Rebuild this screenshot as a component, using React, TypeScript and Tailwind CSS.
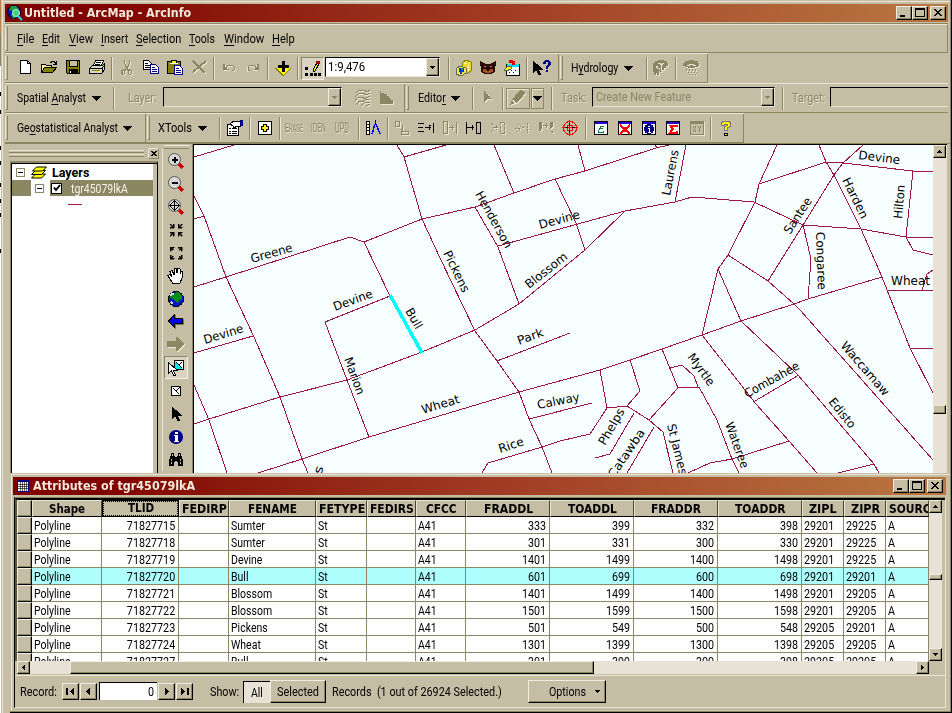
import React, { useLayoutEffect, useRef, useState } from "react";

const UI = "font-['Roboto','Liberation_Sans',sans-serif]";
const BOLD = "font-['DejaVu_Sans','Noto_Sans',sans-serif] font-bold";

/* Text condensed or stretched to an exact width. */
function T({ w, children, className = "" }: { w: number; children: React.ReactNode; className?: string }) {
  const ref = useRef<HTMLSpanElement>(null);
  const [s, setS] = useState(1);
  useLayoutEffect(() => {
    if (ref.current) setS(w / ref.current.offsetWidth);
  }, [w]);
  return (
    <span className={`inline-flex shrink-0 whitespace-nowrap ${className}`} style={{ width: w }}>
      <span ref={ref} className="inline-block shrink-0 origin-left" style={{ transform: `scaleX(${s})` }}>
        {children}
      </span>
    </span>
  );
}

const U = ({ children }: { children: React.ReactNode }) => (
  <span className="underline decoration-black decoration-1 underline-offset-[2px] [text-decoration-skip-ink:none]">{children}</span>
);

const RAISED =
  "bg-[#c6bda5] border-t border-l border-t-[#f0ece0] border-l-[#f0ece0] border-r border-b border-r-black border-b-black shadow-[inset_-1px_-1px_0_#8c8663]";
const DIS = "text-[#8c8663] [text-shadow:1px_1px_0_#e9e4d6]";
const EMB = "[filter:drop-shadow(1px_1px_0_#e9e4d6)]";

const Grip = ({ className = "" }) => (
  <div className={`h-6 w-[3px] shrink-0 border-b border-l border-r border-b-[#8c8663] border-l-[#e9e4d6] border-r-[#8c8663] ${className}`} />
);
const Sep = ({ className = "" }) => (
  <div className={`h-[23px] w-[2px] shrink-0 border-l border-r border-l-[#8c8663] border-r-[#e9e4d6] ${className}`} />
);
const End = ({ className = "" }) => <div className={`h-full w-px shrink-0 bg-[#8c8663] ${className}`} />;
const Arrow = ({ className = "" }) => (
  <svg className={`h-[5px] w-[9px] shrink-0 ${className}`} viewBox="0 0 9 5" shapeRendering="crispEdges">
    <path d="M0 0h9v1h-1v1h-1v1h-1v1h-1v1h-1v-1h-1v-1h-1v-1h-1v-1h-1z" />
  </svg>
);
const Slot = ({ children }: { children: React.ReactNode }) => (
  <div className="flex h-6 w-6 shrink-0 items-center justify-center">{children}</div>
);
function Ic({ children, dis = false, className = "" }: { children: React.ReactNode; dis?: boolean; className?: string }) {
  return (
    <svg className={`h-4 w-4 shrink-0 overflow-visible ${dis ? EMB : ""} ${className}`} viewBox="0 0 16 16" fill="none" stroke={dis ? "#8c8663" : "#000"} shapeRendering="crispEdges">
      {children}
    </svg>
  );
}

/* Toolbar glyphs */
const NewI = () => (<Ic><path d="M3.500 .5h7l3 3v10h-10z" fill="#fff" /><path d="M10.500 .5v3h3" /></Ic>);
const OpenI = () => (
  <Ic>
    <path d="M.5 12.500v-8h4l1 1h5v3" fill="#fff29a" />
    <path d="M.5 12.500l3-5h12l-4 5z" fill="#848000" />
    <path d="M9 2.500h1v-1h3v1h1v1M15 1v3h-3" />
  </Ic>
);
const SaveI = () => (
  <Ic>
    <path d="M1.500 .5h13v13h-12l-1-1z" fill="#848000" />
    <path d="M4.500 .5h8v6h-8z" fill="#c6bda5" /><path d="M4.500 9.500h8v4h-8z" fill="#000" /><path d="M5.500 11v2" stroke="#fff" />
  </Ic>
);
const PrintI = () => (
  <Ic>
    <path d="M4.500 5.500l2-5h8l-2 5z" fill="#fff" /><path d="M7 2.500h5M6 4.500h5" />
    <path d="M.5 8.500l3-3h10l2-2v6l-3 4h-12z" fill="#d8d8d0" /><path d="M1 8.500h12v4M13 8.500l2.500-3" /><path d="M3 10.500h8" stroke="#848000" /><path d="M8 11.500h3" stroke="#ffff00" />
  </Ic>
);
const CutI = () => (
  <Ic dis>
    <path d="M5 0h1v4h1v2h2V4h1V0h1v4h-1v3H9v2h2v1h2v4h-1v1h-2v-1H9v-3H8V9H7v2H6v3H5v1H3v-1H2v-4h2V9h3V7H6V4H5zM4 10v4h1v-4zM10 11v3h2v-3z" fill="#8c8663" fillRule="evenodd" stroke="none" />
  </Ic>
);
const Sheet = ({ x, y, c = "#000" }: { x: number; y: number; c?: string }) => (
  <g transform={`translate(${x} ${y})`}><path d="M.5.5h5l3 3v6h-8z" fill="#fff" stroke={c} /><path d="M2 3.500h3M2 5.500h5M2 7.500h5" stroke={c} /></g>
);
const CopyI = () => (<Ic><Sheet x={0} y={0} /><Sheet x={7} y={4} c="#000084" /></Ic>);
const PasteI = () => (<Ic><path d="M.5 1.500h13v12h-13z" fill="#848000" /><path d="M4.500 .5h5v3h-5z" fill="#ffff00" /><path d="M3 3.500h8" stroke="#fff" /><Sheet x={7} y={5} c="#000084" /></Ic>);
const DelI = () => (<Ic dis><path d="M2 1l12 12M15 1L2 12" strokeWidth="2" /></Ic>);
const UndoI = ({ flip = false }) => (<Ic dis className={flip ? "-scale-x-100" : ""}><path d="M2.500 4v5h5M4 8l3-3h4l2 2v3l-2 1" /><path d="M2 4h2v3h2v2H2z" fill="#8c8663" stroke="none" /></Ic>);
const AddI = () => (
  <Ic><path d="M0 8h16v1h-1v1h-1v1h-1v1h-1v1h-1v1h-1v1H9v1H7v-1H6v-1H5v-1H4v-1H3v-1H2v-1H1V9H0z" fill="#848000" stroke="none" /><path d="M1 8h14l-7 7z" fill="#ffff00" stroke="none" /><path d="M7 1h3v4h4v3h-4v4H7V8H3V5h4z" fill="#000" stroke="none" /></Ic>
);
const PencilDots = () => (
  <Ic><path d="M0 7h3v3h-3zM0 13h3v3h-3zM5 13h3v3h-3zM9 13h3v3h-3zM13 13h3v3h-3z" fill="#000" stroke="none" /><path d="M8 10l5-9 2 1-5 9-2 1z" fill="#ffff00" /><path d="M12 1l3 1-1 2-3-1z" fill="#f00" stroke="#800" /></Ic>
);
const CatalogI = () => (
  <Ic><path d="M6 3l4-3 5 2v9l-4 3-5-2z" fill="#eedd22" stroke="#848000" /><path d="M8 3h3M12 5v6" stroke="#fff8c0" /><path d="M0 9l4-3 6 2v5l-5 3-5-2z" fill="#f7e84a" stroke="#665" /><path d="M3 8h5v4H6v2H4v-2H3z" fill="#0038d8" stroke="none" /><path d="M5 8h2v2H5z" fill="#008c40" stroke="none" /></Ic>
);
const MaskI = () => (
  <Ic><path d="M0 1h1v1h2v1h2v1h6V3h2V2h2V1h1v5h-1v6h-1v1h-2v1H4v-1H2v-1H1V6H0z" fill="#2a0c02" stroke="none" /><path d="M3 9h3v1h4V9h3v3h-2v1H5v-1H3z" fill="#a5521a" stroke="none" /><path d="M4 6h2v1H4zM10 6h2v1h-2z" fill="#c87840" stroke="none" /><path d="M7 9h2v2H7z" fill="#000" stroke="none" /></Ic>
);
const ToolboxI = () => (
  <Ic><path d="M2.500 4.500h13v11h-13z" fill="#fff" /><path d="M3 4h12v3H3z" fill="#00e0ff" stroke="none" /><path d="M5 0h4v1h2v4H8V3H5z" fill="#e00000" stroke="none" /><path d="M0 10l4-4h3v3l-5 2z" fill="#ffff00" stroke="#665" /><path d="M5 12h8M7 10h7" strokeDasharray="1 3" /></Ic>
);
const Ptr = ({ x = 0, y = 0, fill = "#000" }) => <path transform={`translate(${x} ${y})`} d="M.5.5v11l3-3 2 5h2l-2-5h4z" fill={fill} />;
const HelpPtr = () => (
  <Ic><Ptr x={-1} y={1} /><path d="M9 2h1V1h1V0h4v1h1v1h1v3h-1v1h-1v1h-1v2h-2V6h1V5h1V2h-2v2H9zM12 10h2v2h-2z" fill="#000084" stroke="none" /></Ic>
);
const Hydro1 = () => (
  <Ic dis>
    <path d="M1 3h2V1h3V0h6v1h3v2h1v3h-2v2h-2v2h-2v2H8V8H6V6H4v6H1z" fill="#8c8663" stroke="none" />
    <path d="M6 3h2v1h2V3h2M9.500 4v7" stroke="#e9e4d6" /><path d="M2 6v9h2v-2h1v2h2v-4h1v-1H7V9H5V8H4V7H3V6z" fill="#8c8663" stroke="none" />
  </Ic>
);
const Hydro2 = () => (<Ic dis><path d="M0 3h2V1h4V0h5v1h4v2h1v3h-1v1h-3v1H5V7H2V6H0z" fill="#8c8663" stroke="none" /><path d="M4 5h2V4h4v1h3" stroke="#e9e4d6" /><path d="M3 9l4 6M6 9l4 6M9 9l4 6M12 9l3 5" strokeDasharray="2 1" /></Ic>);
const Contour = () => (<Ic dis><path d="M1 3l3-3h5l3 2 3-2M0 7l4-4h4l3 2 4-2M0 11l3-4h5v2l3-1 4-2M2 15l2-4 3 1 3-2 5-1M6 16l3-3 6-1M11 16l4-2" /></Ic>);
const Histo = () => (<Ic dis><path d="M1 14V1h1v2h3v1h3v2h2v2h2v2h2v4z" fill="#8c8663" stroke="none" /></Ic>);
const PenI = () => (<Ic dis><path d="M1 14l2-5 8-9 4 3-8 9z" fill="#8c8663" /><path d="M2 10l4 3" stroke="#e9e4d6" /></Ic>);
const PropI = () => (<Ic><path d="M.5 4.500h11v11h-11z" fill="#fff" /><path d="M2 8.500h2M5 8.500h5M2 11.500h2M5 11.500h5M2 13.500h2M5 13.500h5" /><path d="M3 4l4-3h6v5h-3l-3 2-1-2z" fill="#fff" /><path d="M13 .5h2v5h-2z" fill="#000084" stroke="#000084" /></Ic>);
const PlusI = () => (<Ic><path d="M1.500 1.500h13v13h-13z" fill="#fff" strokeWidth="1" /><path d="M6.500 4.500h3v2h2v3h-2v2h-3v-2h-2v-3h2z" fill="#ffff00" /></Ic>);
const CompassI = () => (<Ic><path d="M1.500 1.500h3v13h-3z" fill="#fff" /><path d="M2 4.500h2M2 7.500h2M2 10.500h2" /><path d="M10.500 0v4" /><path d="M10 4L7 14M11 4l4 10" stroke="#00f" strokeWidth="1.500" /></Ic>);
const B1 = () => (<Ic dis><path d="M1.500 1.500h4v5h-4zM8.500 4.500v6M7 9l2 2M7.500 11.500h7v3h-7z" /></Ic>);
const Extend = () => (<Ic><path d="M0 3.500h6M0 7.500h5M0 11.500h6M7 7.500h6M12.500 4.500v1M11.500 5v5M15.500 3v10" /></Ic>);
const BoxArrow = ({ dis = false, flip = false }) => (
  <Ic dis={dis}>{flip ? <path d="M.5 2v12M1 7.500h7M6.500 5v5M10.500 2.500h4v11h-4z" /> : <path d="M1.500 1.500h4v12h-4zM7 7.500h5M10.500 5v5M14.500 2v12" />}</Ic>
);
const B2 = () => (<Ic dis><path d="M1 3l2 2M1 12l2-2M3 7.500h5M6.500 5v5M10.500 2.500h4v11h-4z" strokeDasharray="3 1" /></Ic>);
const B3 = () => (<Ic dis><path d="M4 4l3 3M1 8h6M3 12l3-3M8 7.500h3M13.500 3v10" strokeDasharray="2 1" /></Ic>);
const B4 = () => (<Ic dis><path d="M1 2h2v7l-1 2-1-2zM5 5.500h5M8 3v5M11.500 2.500h3v4l-2 2M13 11h1v2" fill="#8c8663" /></Ic>);
const Target = () => (<Ic><circle cx="8" cy="8" r="6.500" stroke="#f00" /><circle cx="8" cy="8" r="3" stroke="#f00" /><path d="M7.500 0v16M0 7.500h16" stroke="#f00" /><path d="M7.500 3v3M7.500 10v3M3 7.500h3M10 7.500h3" /></Ic>);
const TableI = ({ children, dis = false }: { children: React.ReactNode; dis?: boolean }) => (
  <Ic dis={dis}><path d="M1.500 1.500h13v13h-13z" fill={dis ? "#c6bda5" : "#fff"} /><path d="M2 2h12v2H2z" fill={dis ? "#8c8663" : "#2800d8"} stroke="none" />{children}</Ic>
);
const HelpY = () => (<Ic><path d="M3.500 5V3l2-2h5l2 2v3l-3 2v2h-3V7l3-2V4h-3v1z" fill="#ffff00" stroke="#777" /><path d="M6.500 13h3v2h-3z" fill="#ffff00" /></Ic>);

/* Map tool glyphs */
const Lens = ({ d, thin = false }: { d: string; thin?: boolean }) => (
  <Ic><path d="M11 11l4 4" stroke="#d00000" strokeWidth="3" /><circle cx="6.500" cy="6.500" r="6" fill="#d8d8d8" shapeRendering="auto" stroke="#555" /><path d={d} strokeWidth={thin ? 1 : 2} /></Ic>
);
const Four = ({ out = false }) => (
  <Ic>
    {out ? (
      <path d="M2 2h4v1H4v1h1v1H4V4H3v2H2zM10 2h4v4h-1V4h-1v1h-1V4h1V3h-2zM2 10h1v2h1v-1h1v1H4v1h2v1H2zM13 10h1v4h-4v-1h2v-1h-1v-1h1v1h1z" strokeWidth=".5" fill="#000" />
    ) : (
      <path d="M2 2h1v1h1v1h1V2h1v4H2V5h2V4H3V3H2zM13 2h1v1h-1v1h-1v1h2v1h-4V2h1v2h1V3h1zM2 10h4v4H5v-2H4v1H3v1H2v-1h1v-1h1v-1H2zM10 10h4v1h-2v1h1v1h1v1h-1v-1h-1v-1h-1v2h-1z" strokeWidth=".5" fill="#000" />
    )}
  </Ic>
);
const Hand = () => (<Ic><path d="M5 15.500l-4-6-1-2 2-1 2 2-2-5 2-1 2 4V1l2-1 1 5 1-5 2 1v5l1-3 2 1-1 6-2 5z" fill="#fff" /></Ic>);
const Globe = () => (<Ic><circle cx="8" cy="8" r="7.500" fill="#0018c0" /><path d="M6 2l4-1 4 3v4l-3 1-1 4-3-3-2-2-3-1 1-3z" fill="#008c18" stroke="none" /><path d="M2 5l2-2 2 0M3 11l2 2" stroke="#c8d8f0" strokeWidth="1.500" /></Ic>);
const BigArrow = ({ right = false }) => (
  <Ic dis={right} className={right ? "" : "[filter:drop-shadow(1px_1px_0_#777)]"}>
    {right ? <path d="M-1 4h9V0h2l6 7-6 7H8v-4h-9z" fill="#8c8663" stroke="none" /> : <path d="M14.500 4.500h-8v-4L.5 7l6 6.500v-4h8z" fill="#0000ff" />}
  </Ic>
);
const SelFeat = () => (<Ic><path d="M6.500.5h9v9h-9z" fill="#fff" strokeWidth="1.500" /><path d="M7 1l7 8H7z" fill="#00e8f0" stroke="none" /><path d="M8 2l6 6M11 5l3-3" /><Ptr x={0} y={2} fill="#fff" /></Ic>);
const ClearSel = () => (<Ic><path d="M3.500 3.500h9v9h-9z" fill="#fff" strokeWidth="1.500" /><path d="M5 5l6 6M8 8l4-4" /></Ic>);
const Info = () => (<Ic><circle cx="8" cy="8" r="7" fill="#000084" stroke="none" shapeRendering="auto" /><path d="M7 3h3v2H7zM6 6h4v6h1v1H6v-1h1V7H6z" fill="#fff" stroke="none" /></Ic>);
const Bino = () => (<Ic><path d="M3 1h3v3h1v1h2V4h1V1h3v3h1v3h1v7h-5v-4H9V9H7v1H6v4H1V7h1V4h1z" fill="#000" stroke="none" /><path d="M3.500 7v5M12.500 7v5M4.500 2v3M11.500 2v3" stroke="#c6bda5" strokeDasharray="2 1" /></Ic>);

const LOOKUP: Record<string, React.ReactNode> = {
  in: <Lens d="M3.500 6.500h6M6.500 3.500v6" />, out: <Lens d="M3.500 6.500h6" />, full: <Lens thin d="M1 6.500h11M6.500 1v11M4.500 3v1M3 4.500h1M8.500 3v1M9 4.500h1M4.500 9v1M3 8.500h1M8.500 9v1M9 8.500h1M5 2.500h3M5 10.500h3M2.500 5v3M10.500 5v3" />,
  fin: <Four />, fout: <Four out />, pan: <Hand />, globe: <Globe />, back: <BigArrow />, fwd: <BigArrow right />,
  sel: <SelFeat />, clear: <ClearSel />, ptr: <Ic><Ptr x={4} y={1} /></Ic>, info: <Info />, find: <Bino />,
};

const WinBtn = ({ d, className = "" }: { d: string; className?: string }) => (
  <div className={`flex h-[14px] w-4 items-center justify-center ${RAISED} ${className}`}>
    <svg className="h-[10px] w-[10px]" viewBox="0 0 10 10" fill="none" stroke="#000" shapeRendering="crispEdges"><path d={d} /></svg>
  </div>
);
const WinBtns = () => (
  <div className="ml-auto mr-[2px] flex">
    <WinBtn d="M1 8h5M1 7.500h5" /><WinBtn d="M.5 .5h9v8h-9zM.5 1.500h9" /><WinBtn className="ml-[2px]" d="M1 1l7 7M2 1l7 7M8 1l-7 7M9 1l-7 7" />
  </div>
);
const TITLE = "flex shrink-0 items-center bg-linear-to-r from-[#800000] from-10% via-[#a03822] via-50% to-[#b87842]";

function Combo({ children, className, cut = false, dis = true }: { children?: React.ReactNode; className: string; cut?: boolean; dis?: boolean }) {
  return (
    <div className={`-mt-[2px] flex h-[20px] shrink-0 border-t border-l border-black border-b border-b-[#e9e4d6] pl-[2px] ${cut ? "" : "border-r border-r-[#e9e4d6]"} ${className}`}>
      <div className="flex flex-1 items-center">{children}</div>
      {!cut && (
        <div className={`flex h-[18px] w-[13px] items-center justify-center ${RAISED}`}>
          <svg className="h-[3px] w-[5px]" viewBox="0 0 5 3" shapeRendering="crispEdges"><path d="M0 0h5v1h-1v1h-1v1h-1v-1h-1v-1h-1z" fill={dis ? "#8c8663" : "#000"} /></svg>
        </div>
      )}
    </div>
  );
}

const TB = "flex h-[30px] shrink-0 items-center border-t border-b border-t-[#e9e4d6] border-b-[#8c8663] text-[13px] leading-[14px]";

const ROADS = [
  "194,157 234,145", "194,196 204,216 226,277 254,337 280,397 302,459 308,473", "194,219 204,216",
  "194,287 226,277 350,237 364,242 422,219 475,207 514,193 555,179 585,171 656,148 669,145",
  "397,145 404,157 422,219 440,258 475,331 497,361 519,392 529,419 542,447 552,473", "404,157 446,145",
  "364,242 390,296", "390,296 325,322 347,380 369,437", "194,353 253,336", "194,385 209,420 227,473",
  "194,424 209,419 280,397 347,380 422,352 475,330 519,304 585,250 625,211",
  "258,473 302,459 369,437 519,392 600,370 630,360 662,349 702,335 741,321 794,304 808,299 882,277",
  "475,207 498,247 519,304", "498,246 625,211 675,202 692,197 754,202", "494,145 514,193", "555,179 576,223 585,250",
  "578,145 585,171", "655,145 657,148", "686,145 675,202", "777,145 759,184 755,202 728,255 718,269 702,335",
  "759,184 826,162 843,163 913,171 933,171", "819,145 826,162 834,175 861,229 882,277 887,290 895,310 910,348 933,393",
  "910,348 933,349", "863,145 843,163 834,175 803,225 768,281", "754,202 803,225 861,229 906,237 933,237",
  "913,171 906,237 913,250 933,255", "803,225 811,259 808,299", "728,255 768,281 794,304 800,310 933,460",
  "718,269 741,321 798,375 874,464 879,473", "887,290 933,291", "922,290 927,274 933,270",
  "702,335 756,404 789,441 817,473", "600,370 607,408 627,406 640,391 630,360",
  "607,408 590,434 560,441 542,447 488,463 482,473", "627,406 649,420 663,432 673,473", "654,427 627,473",
  "649,420 678,388 699,387 717,420 732,459 739,473", "678,388 662,349", "670,368 682,365 694,376 698,387",
  "634,413 610,454 595,458", "688,473 710,463 732,459 789,441", "755,401 799,375", "838,473 874,464", "497,361 570,333", "529,419 592,403",
];
const LABELS: [string, number, number, number, number][] = [
  ["Greene", 252, 263, -16, 43], ["Devine", 335, 311, -20, 41], ["Devine", 205, 344, -17, 41], ["Bull", 405, 311, 60, 22],
  ["Pickens", 443, 253, 64, 45], ["Henderson", 475, 194, 61, 63], ["Devine", 540, 229, -15, 42], ["Blossom", 529, 289, -38, 50],
  ["Laurens", 670, 196, -79, 46], ["Park", 519, 345, -20, 27], ["Marion", 344, 359, 70, 39], ["Wheat", 423, 414, -17, 39],
  ["Calway", 538, 409, -11, 43], ["Rice", 500, 453, -18, 26], ["Phelps", 605, 446, -60, 40], ["Catawba", 614, 479, -56, 56],
  ["St James", 667, 425, 76, 52], ["Myrtle", 687, 357, 54, 37], ["Wateree", 725, 424, 70, 48], ["Combahee", 747, 398, -29, 61],
  ["Waccamaw", 840, 346, 49, 67], ["Edisto", 828, 402, 51, 35], ["Santee", 790, 235, -57, 41], ["Harden", 842, 180, 64, 44],
  ["Hilton", 902, 219, -85, 34], ["Devine", 858, 159, 7, 42], ["Congaree", 816, 232, 88, 58], ["Wheat", 891, 285, 0, 39], ["s", 321, 475, -70, 8],
];

const COLS: [string, string, number, boolean][] = [
  ["Shape", "w-[70px]", 36, false], ["TLID", "w-[77px]", 26, true], ["FEDIRP", "w-[50px]", 45, false], ["FENAME", "w-[87px]", 49, false],
  ["FETYPE", "w-[51px]", 46, false], ["FEDIRS", "w-[49px]", 44, false], ["CFCC", "w-[50px]", 31, false], ["FRADDL", "w-[84px]", 49, true],
  ["TOADDL", "w-[84px]", 49, true], ["FRADDR", "w-[84px]", 50, true], ["TOADDR", "w-[84px]", 51, true], ["ZIPL", "w-[42px]", 28, false],
  ["ZIPR", "w-[42px]", 29, false], ["SOURC", "w-[43px]", 42, false],
];
const row = (id: string, name: string, n: string, zl: string, zr: string) => ["Polyline", id, "", name, "St", "", "A41", ...n.split(" "), zl, zr, "A"];
const ROWS = [
  row("71827715", "Sumter", "333 399 332 398", "29201", "29225"), row("71827718", "Sumter", "301 331 300 330", "29201", "29225"),
  row("71827719", "Devine", "1401 1499 1400 1498", "29201", "29225"), row("71827720", "Bull", "601 699 600 698", "29201", "29201"),
  row("71827721", "Blossom", "1401 1499 1400 1498", "29201", "29205"), row("71827722", "Blossom", "1501 1599 1500 1598", "29201", "29205"),
  row("71827723", "Pickens", "501 549 500 548", "29205", "29201"), row("71827724", "Wheat", "1301 1399 1300 1398", "29205", "29205"),
  row("71827727", "Bull", "301 399 300 398", "29205", "29205"),
];

const SmallBtn = ({ d, className = "h-[13px] w-[13px]" }: { d: string; className?: string }) => (
  <div className={`flex shrink-0 items-center justify-center ${RAISED} ${className}`}>
    <svg className="h-[9px] w-[11px]" viewBox="0 0 11 9" shapeRendering="crispEdges"><path d={d} /></svg>
  </div>
);
const UP = "M5 3h1v1h1v1h1v1H3v-1h1v-1h1z";
const DOWN = "M3 3h5v1h-1v1h-1v1h-1v-1h-1v-1h-1z";
const LEFT = "M6 2h1v5H6v-1H5v-1H4v-1h1v-1h1z";
const RIGHT = "M4 2h1v1h1v1h1v1h-1v1h-1v1h-1z";

const MENU: [string, string, number, string][] = [
  ["F", "ile", 17, "ml-[9px]"], ["E", "dit", 18, "ml-[8px]"], ["V", "iew", 24, "ml-[9px]"], ["I", "nsert", 27, "ml-[8px]"],
  ["S", "election", 45, "ml-[8px]"], ["T", "ools", 26, "ml-[8px]"], ["W", "indow", 40, "ml-[9px]"], ["H", "elp", 23, "ml-[8px]"],
];

function AttributeWindow() {
  return (
    <div className="absolute left-[10px] top-[473px] flex h-[240px] w-[942px] flex-col border-b border-r border-black bg-[#c6bda5]">
      <div className="flex flex-1 flex-col border-b border-r border-b-[#8c8663] border-r-[#8c8663] pl-px pt-px">
        <div className="flex flex-1 flex-col border-l border-t border-[#e9e4d6] pl-px pr-[3px] pt-[2px]">
          <div className={`h-[18px] w-[933px] pr-px ${TITLE}`}>
            <svg className="ml-1 h-3 w-3" viewBox="0 0 12 12" shapeRendering="crispEdges"><path d="M0 0h12v12H0z" fill="#000084" /><path d="M1 2h10v9H1z" fill="#fff" /><path d="M1 4.500h10M1 6.500h10M1 8.500h10M3.500 2v9M5.500 2v9M7.500 2v9M9.500 2v9" stroke="#000" strokeWidth=".6" /></svg>
            <T w={162} className={`ml-[4px] text-[12px] leading-[16px] text-[#f1e9dc] ${BOLD}`}>Attributes of tgr45079lkA</T>
            <WinBtns />
          </div>
          <div className="ml-px mt-[2px] flex h-[211px] w-[932px] flex-col border-b border-l border-r border-t border-b-[#e9e4d6] border-l-black border-r-[#e9e4d6] border-t-[#8c8663]">
            <div className="flex h-[178px] shrink-0 flex-col border-b border-b-[#e9e4d6]">
              <div className="flex h-[163px] border-l-2 border-t-2 border-l-[#5c583e] border-t-black">
                <div className="flex w-[912px] flex-col overflow-hidden">
                  <div className="flex h-[17px] shrink-0">
                    <div className={`w-[15px] shrink-0 ${RAISED}`} />
                    {COLS.map(([n, cw, tw], i) => (
                      <div key={n} className={`flex shrink-0 items-center overflow-hidden bg-[#c6bda5] ${cw} ${n === "TLID" ? "justify-center border border-black pb-[2px] outline-1 -outline-offset-2 outline-dotted outline-black" : "border-b border-l border-r border-t border-b-black border-l-[#e9e4d6] border-r-[#4a4630] border-t-[#e9e4d6]"} ${i === 13 ? "justify-start pl-[2px]" : "justify-center"}`}>
                        <T w={tw} className={`text-[12px] leading-[14px] ${BOLD}`}>{n}</T>
                      </div>
                    ))}
                  </div>
                  {ROWS.map((r, k) => (
                    <div key={k} className={`flex h-[17px] shrink-0 ${k === 3 ? "bg-[#b0ffff]" : "bg-white"}`}>
                      <div className={`w-[15px] shrink-0 ${RAISED}`} />
                      {r.map((v, i) => (
                        <div key={i} className={`flex shrink-0 items-center border-b border-r border-[#8c8663] text-[12.5px] leading-[15px] ${COLS[i][1]} ${COLS[i][3] ? "justify-end pr-[3px]" : "pl-[2px]"}`}>
                          <span className={COLS[i][3] ? "origin-right scale-x-[0.86]" : i > 9 ? "origin-left scale-x-[0.86]" : "origin-left scale-x-[0.84]"}>{v}</span>
                        </div>
                      ))}
                    </div>
                  ))}
                </div>
                <div className="flex w-[13px] flex-col bg-[#e7e2d5]">
                  <SmallBtn d={UP} />
                  <div className={`mt-[61px] h-[6px] ${RAISED}`} />
                  <div className="flex-1" />
                  <SmallBtn d={DOWN} />
                </div>
              </div>
              <div className="ml-[2px] flex h-[13px] w-[912px] bg-[#e7e2d5]">
                <SmallBtn d={LEFT} />
                <div className={`ml-[40px] w-[524px] ${RAISED}`} />
                <div className="flex-1" />
                <SmallBtn d={RIGHT} />
              </div>
            </div>
            <div className="flex h-[30px] items-center text-[13px] leading-[15px]">
              <T w={37} className="ml-[5px]">Record:</T>
              <SmallBtn className="ml-[5px] h-[17px] w-[17px]" d="M1 1h2v7H1zM8 1h1v7H8v-1H7v-1H6v-1H5v-1h1v-1h1v-1h1z" />
              <SmallBtn className="ml-px h-[17px] w-[17px]" d="M6 1h1v7H6v-1H5v-1H4v-1H3v-1h1v-1h1v-1h1z" />
              <div className="ml-[2px] flex h-[18px] w-[58px] items-center justify-end border-l border-t border-black bg-white pr-[3px] text-[12.5px]"><T w={6}>0</T></div>
              <SmallBtn className="ml-px h-[17px] w-[17px]" d="M4 1h1v1h1v1h1v1h1v1h-1v1h-1v1h-1v1h-1z" />
              <SmallBtn className="ml-px h-[17px] w-[17px]" d="M2 1h1v1h1v1h1v1h1v1H5v1H4v1H3v1H2zM8 1h2v7H8z" />
              <T w={29} className="ml-[17px]">Show:</T>
              <div className="ml-[4px] mt-px flex h-[22px] w-[27px] items-center justify-center border-l border-t border-black bg-[#e7e2d5]"><T w={12}>All</T></div>
              <div className={`mt-px flex h-[23px] w-[56px] items-center justify-center ${RAISED}`}><T w={42}>Selected</T></div>
              <T w={170} className="ml-[6px]">Records&nbsp; (1 out of 26924 Selected.)</T>
              <div className={`ml-[26px] mt-px flex h-[23px] w-[78px] items-center pl-[20px] ${RAISED}`}>
                <T w={37}>Options</T>
                <svg className="ml-[9px] h-[3px] w-[5px]" viewBox="0 0 5 3" shapeRendering="crispEdges"><path d="M0 0h5v1h-1v1h-1v1h-1v-1h-1v-1h-1z" /></svg>
              </div>
            </div>
          </div>
        </div>
      </div>
    </div>
  );
}

export default function App() {
  return (
    <div className={`relative flex h-[713px] w-[952px] overflow-hidden bg-[#c6bda5] text-black ${UI}`}>
      <div className="flex w-px shrink-0 flex-col bg-white">
        <div className="h-[34px] bg-[#b8864a]" /><div className="h-[32px] bg-[#8c8663]" />
        {[30, 18, 36, 15, 22, 16, 14, 36].map((h, i) => (
          <div key={i} className="border-b-4 border-black" style={{ height: h }} />
        ))}
      </div>
      <div className="flex w-[951px] shrink-0 border-r border-black pl-px">
        <div className="flex w-[949px] flex-col border-l border-r border-l-[#e9e4d6] border-r-[#8c8663] pl-[2px]">
          <div className="-ml-[2px] mt-px h-px shrink-0 bg-[#e9e4d6]" />
          <div className={`mt-[2px] h-[18px] w-[943px] ${TITLE}`}>
            <svg className="ml-[2px] h-4 w-4" viewBox="0 0 16 16"><circle cx="7" cy="7" r="6.500" fill="#0018a8" stroke="#002" /><path d="M4 1l5 0 3 3-3 3-4-1-3-1zM4 9l4 0 1 3-3 2z" fill="#1a9c3c" /><circle cx="9" cy="8" r="3.500" fill="#3ad070" stroke="#c8f0e8" /><path d="M11 11l4 4" stroke="#30d8e8" strokeWidth="2" /></svg>
            <T w={167} className={`ml-px text-[12px] leading-[16px] text-[#f1e9dc] ${BOLD}`}>Untitled - ArcMap - ArcInfo</T>
            <WinBtns />
          </div>
          <div className="mt-px h-px w-[943px] shrink-0 bg-[#8c8663]" />

          <div className="flex h-[29px] w-[943px] shrink-0 items-center border-b border-r border-t border-b-[#8c8663] border-r-[#8c8663] border-t-[#e9e4d6] text-[13px] leading-[14px]">
            <Grip />
            {MENU.map(([a, b, w, m]) => (
              <T key={b} w={w} className={m}><U>{a}</U>{b}</T>
            ))}
          </div>

          <div className={`${TB} w-[703px]`}>
            <Grip className="mr-[5px]" />
            <Slot><NewI /></Slot><Slot><OpenI /></Slot><Slot><SaveI /></Slot><Slot><PrintI /></Slot>
            <Sep className="mx-[2px]" />
            <Slot><CutI /></Slot><Slot><CopyI /></Slot><Slot><PasteI /></Slot><Slot><DelI /></Slot>
            <Sep className="mx-[2px]" />
            <Slot><UndoI /></Slot><Slot><UndoI flip /></Slot>
            <Sep className="mx-[2px]" />
            <Slot><AddI /></Slot>
            <Sep className="mx-[2px]" />
            <div className="flex h-[23px] w-[23px] shrink-0 items-center justify-center border border-b-[#f4f0e6] border-l-[#8c8663] border-r-[#f4f0e6] border-t-[#8c8663] bg-[#d9d2c1]"><PencilDots /></div>
            <Combo dis={false} className="ml-px w-[115px] bg-white"><T w={37}>1:9,476</T></Combo>
            <Sep className="ml-[8px] mr-[2px]" />
            <Slot><CatalogI /></Slot><Slot><MaskI /></Slot><Slot><ToolboxI /></Slot>
            <Sep className="mx-[2px]" />
            <Slot><HelpPtr /></Slot>
            <End className="ml-[4px]" /><Grip className="ml-px" />
            <T w={47} className="ml-[8px]">H<U>y</U>drology</T><Arrow className="ml-[6px]" />
            <Sep className="ml-[13px]" /><Slot><Hydro1 /></Slot>
            <Sep className="ml-[3px] mr-[2px]" /><Slot><Hydro2 /></Slot>
            <End className="ml-auto" />
          </div>

          <div className={`${TB} w-[943px]`}>
            <Grip />
            <T w={69} className="ml-[9px]">Spatial <U>A</U>nalyst</T><Arrow className="ml-[6px]" />
            <Sep className="ml-[12px]" />
            <T w={29} className={`ml-[13px] ${DIS}`}>Layer:</T>
            <Combo className="ml-[6px] w-[179px]" />
            <div className="ml-[13px] flex"><Contour /></div>
            <div className="ml-[8px] flex"><Histo /></div>
            <End className="ml-[9px]" /><Grip className="ml-px" />
            <T w={28} className="ml-[9px]">Edito<U>r</U></T><Arrow className="ml-[5px]" />
            <Sep className="ml-[12px]" />
            <div className="ml-[6px] flex"><Ic dis><path d="M4 1v11l3-3h5V8h-2V6H8V4H6V2H5V1z" fill="#8c8663" stroke="none" /></Ic></div>
            <Sep className="ml-[6px]" />
            <div className="ml-[2px] flex h-[21px] w-6 shrink-0 items-center justify-center border border-[#8c8663] shadow-[inset_1px_1px_0_#e9e4d6]"><PenI /></div>
            <div className="ml-px flex h-[21px] w-[13px] shrink-0 items-center justify-center border border-[#8c8663] shadow-[inset_1px_1px_0_#e9e4d6]"><Arrow /></div>
            <Sep className="ml-[7px]" />
            <T w={26} className={`ml-[8px] ${DIS}`}>Task:</T>
            <Combo className="ml-[5px] w-[183px]"><T w={95} className="ml-px text-[#8c8663]">Create New Feature</T></Combo>
            <Sep className="ml-[7px]" />
            <T w={33} className={`ml-[8px] ${DIS}`}>Target:</T>
            <Combo cut className="ml-[5px] w-[118px]" />
          </div>

          <div className={`${TB} w-[739px]`}>
            <Grip />
            <T w={101} className="ml-[9px]">Ge<U>o</U>statistical Analyst</T><Arrow className="ml-[5px]" />
            <End className="ml-[13px]" /><Grip className="ml-px" />
            <T w={34} className="ml-[8px]">XTools</T><Arrow className="ml-[6px]" />
            <Sep className="ml-[12px]" /><div className="ml-[6px] flex"><PropI /></div>
            <Sep className="ml-[6px]" /><div className="ml-[6px] flex"><PlusI /></div>
            <Sep className="ml-[6px]" />
            <T w={18} className={`ml-[4px] text-[13px] ${DIS}`}>E<span className="text-[11px]">RASE</span></T>
            <T w={15} className={`ml-[8px] text-[13px] ${DIS}`}>IDEN</T>
            <T w={14} className={`ml-[9px] text-[14px] ${DIS}`}>UPD</T>
            <Sep className="ml-[9px]" /><div className="ml-[5px] flex"><CompassI /></div>
            <Sep className="ml-[6px] mr-px" />
            <Slot><B1 /></Slot><Slot><Extend /></Slot><Slot><BoxArrow dis /></Slot><Slot><BoxArrow flip /></Slot>
            <Slot><B2 /></Slot><Slot><B3 /></Slot><Slot><B4 /></Slot><Slot><Target /></Slot>
            <Sep className="ml-[3px] mr-[2px]" />
            <Slot><TableI><path d="M11 6.500H7.500v2H10M7 8.500l-1.500 2v2H10V11" stroke="#008040" /></TableI></Slot>
            <Slot><TableI><path d="M3 5l10 9M13 5L3 14" stroke="#f00" strokeWidth="2.400" /></TableI></Slot>
            <Slot><TableI><circle cx="8" cy="9" r="5" fill="#000084" stroke="none" /><path d="M7 6h2M7 8.500h1.500v4M7 12.500h3" stroke="#fff" /></TableI></Slot>
            <Slot><TableI><path d="M12 7V5.500H5L8 9l-3 3.500h7V11" stroke="#f00" strokeWidth="2" /></TableI></Slot>
            <Slot><TableI dis><path d="M4 6l3 6M7 6l-3 6M9 6l1.500 3L12 6M10.500 9v3" /></TableI></Slot>
            <Sep className="ml-px mr-[2px]" />
            <Slot><HelpY /></Slot>
            <End className="ml-auto" />
          </div>

          <div className="flex h-[570px] w-[945px] border-t border-t-[#8c8663]">
            <div className="ml-[4px] flex w-[151px] shrink-0 flex-col pt-[3px]">
              <div className="flex h-[13px] items-center">
                <div className="flex w-[135px] flex-col gap-px">
                  <div className="h-[3px] border-b border-t border-b-[#8c8663] border-t-[#e9e4d6]" />
                  <div className="h-[3px] border-b border-t border-b-[#8c8663] border-t-[#e9e4d6]" />
                </div>
                <div className="ml-[4px] flex h-[11px] w-[11px] items-center justify-center border border-b-[#8c8663] border-l-[#e9e4d6] border-r-[#8c8663] border-t-[#e9e4d6]">
                  <svg className="h-[5px] w-[6px]" viewBox="0 0 6 5" shapeRendering="crispEdges"><path d="M0 0l5 5M1 0l5 5M5 0L0 5M6 0L1 5" stroke="#000" /></svg>
                </div>
              </div>
              <div className="ml-px mt-[1px] w-[148px] flex-1 border-l border-r border-t-2 border-l-[#8c8663] border-r-black border-t-[#8c8663]">
                <div className="h-full border-l border-t border-black pr-[4px]">
                  <div className="h-full bg-white">
                    <div className="flex h-4 items-center">
                      <Minus className="ml-[4px]" />
                      <svg className="ml-[6px] h-[13px] w-4" viewBox="0 0 16 13" fill="#ffff00" stroke="#000"><path d="M.5 12l4-4h10l-4 4z" /><path d="M.5 8.500l4-4h10l-4 4z" /><path d="M1.500 5l4-4h10l-4 4z" /></svg>
                      <T w={37} className="ml-[5px] text-[12.5px] font-bold leading-[15px]">Layers</T>
                    </div>
                    <div className="flex h-4 items-center">
                      <div className="h-4 w-[19px] bg-[#8c8663]" />
                      <Minus className="ml-[4px]" />
                      <div className="ml-[6px] flex h-4 flex-1 items-center bg-[#8c8663]">
                        <div className="ml-px flex h-[11px] w-[11px] items-center justify-center border border-black bg-white">
                          <svg className="h-[8px] w-[8px]" viewBox="0 0 8 8" fill="none" stroke="#000" strokeWidth="2"><path d="M1 3.500l2 2.500 4-5" /></svg>
                        </div>
                        <T w={57} className="ml-[9px] text-[13px] leading-[15px] text-[#f7f3ea]">tgr45079lkA</T>
                      </div>
                    </div>
                    <div className="ml-[56px] mt-[8px] h-px w-[14px] bg-[#9c1448]" />
                  </div>
                </div>
              </div>
            </div>

            <div className="flex w-[32px] shrink-0 flex-col pl-[2px] pt-px">
              <div className="ml-[2px] h-[4px] w-[25px] border-b border-t border-b-[#8c8663] border-t-[#e9e4d6]" />
              <div className="flex flex-col border-l border-[#e9e4d6] pl-px">
                {Object.keys(LOOKUP).map((k) => (
                  <div key={k} className={`flex h-[23px] w-[24px] items-center justify-center ${k === "sel" ? "border border-b-[#f4f0e6] border-l-[#8c8663] border-r-[#f4f0e6] border-t-[#8c8663] bg-[#d9d2c1]" : ""}`}>{LOOKUP[k]}</div>
                ))}
              </div>
            </div>

            <div className="w-[741px] shrink-0 border-l border-[#8c8663]">
              <div className="h-full border-l border-t border-black bg-[#f7ffff]">
                <svg className="block h-[330px] w-[739px]" viewBox="194 145 739 330" fill="none">
                  <g stroke="#9c1448" shapeRendering="crispEdges">
                    {ROADS.map((p) => <polyline key={p} points={p} />)}
                  </g>
                  <path d="M390 295L422 353" stroke="#00ffff" strokeWidth="3.500" shapeRendering="crispEdges" />
                  <g fill="#000" className="font-['DejaVu_Sans',sans-serif] text-[12px]">
                    {LABELS.map(([t, x, y, a, l], i) => (
                      <text key={i} transform={`translate(${x} ${y}) rotate(${a})`} textLength={l} lengthAdjust="spacingAndGlyphs">{t}</text>
                    ))}
                  </g>
                </svg>
              </div>
            </div>
            <div className="flex w-[14px] shrink-0 flex-col border-t border-black bg-[#e7e2d5]">
              <SmallBtn className="h-[13px] w-[13px]" d={UP} />
              <div className={`mt-[247px] h-[9px] w-[13px] ${RAISED}`} />
            </div>
          </div>
        </div>
      </div>
      <AttributeWindow />
    </div>
  );
}

function Minus({ className = "" }) {
  return (
    <div className={`flex h-[9px] w-[9px] shrink-0 items-center justify-center border border-[#8c8663] bg-white ${className}`}>
      <div className="h-px w-[5px] bg-black" />
    </div>
  );
}
